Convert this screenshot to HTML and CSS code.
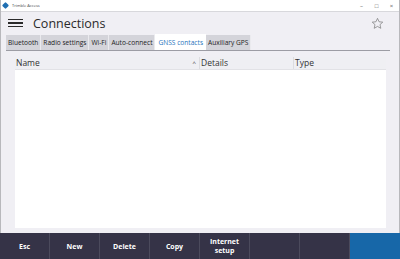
FILE: index.html
```html
<!DOCTYPE html>
<html>
    <head>
        <meta name="viewport" content="width=device-width, initial-scale=1.0">
        <link rel="stylesheet" href="styles.css">
    </head>
    <body>
        <div class="window">
            <div class="titlebar">
                <span class="appicon"></span>
                <span class="apptitle">Trimble Access</span>
                <span class="winbtns">
                    <span class="wb">&#8211;</span>
                    <span class="wb">&#9633;</span>
                    <span class="wb">&#215;</span>
                </span>
            </div>
            <div class="header">
                <div class="burger"><i></i><i></i><i></i></div>
                <p class="title">Connections</p>
                <svg class="star" width="13" height="13" viewBox="0 0 24 24">
                    <path d="M12 2.5l2.9 6.3 6.8.7-5.1 4.6 1.5 6.8L12 17.4l-6.1 3.5 1.5-6.8-5.1-4.6 6.8-.7z" fill="none" stroke="#777" stroke-width="1.3"/>
                </svg>
            </div>
            <div class="tabs">
                <button class="tab">Bluetooth</button>
                <button class="tab">Radio settings</button>
                <button class="tab">Wi-Fi</button>
                <button class="tab">Auto-connect</button>
                <button class="tab active">GNSS contacts</button>
                <button class="tab">Auxiliary GPS</button>
            </div>
            <div class="content">
                <div class="table">
                    <div class="thead">
                        <div class="th name">Name <span class="sort">^</span></div>
                        <div class="th details">Details</div>
                        <div class="th type">Type</div>
                    </div>
                    <div class="tbody"></div>
                </div>
            </div>
            <div class="softkeys">
                <button class="key">Esc</button>
                <button class="key">New</button>
                <button class="key">Delete</button>
                <button class="key">Copy</button>
                <button class="key">Internet<br>setup</button>
                <button class="key"></button>
                <button class="key"></button>
                <button class="key enter"></button>
            </div>
        </div>
    </body>
</html>
```

FILE: styles.css
```css
body{
    margin: 0;
    font-family: "Open Sans", "Noto Sans", sans-serif;
    background: #f0eff4;
}
.window{
    width: 400px;
    height: 259px;
    box-sizing: border-box;
    border-left: 1px solid #b8b8bc;
    border-right: 1px solid #b8b8bc;
    display: flex;
    flex-direction: column;
    background: #f0eff4;
}
.titlebar{
    height: 11px;
    background: #fff;
    border-bottom: 1px solid #d8d8dc;
    display: flex;
    align-items: center;
    padding-left: 2px;
}
.appicon{
    width: 5px;
    height: 5px;
    background: #1f6fb2;
    border-radius: 1px;
    transform: rotate(45deg);
}
.apptitle{
    font-size: 4px;
    color: #444;
    margin-left: 4px;
}
.winbtns{
    margin-left: auto;
    display: flex;
}
.wb{
    width: 15px;
    text-align: center;
    font-size: 6px;
    color: #555;
}
.header{
    height: 22px;
    display: flex;
    align-items: center;
    padding: 0 15px 0 7px;
}
.burger{
    width: 15px;
    display: flex;
    flex-direction: column;
    gap: 2px;
}
.burger i{
    display: block;
    height: 1.3px;
    background: #2a2a2a;
}
.title{
    margin: 0 0 0 10px;
    font-size: 12.5px;
    color: #2a2a2a;
}
.star{
    margin-left: auto;
}
.tabs{
    margin: 0 9px 0 5px;
    display: flex;
    border-bottom: 1px solid #9c9ca4;
    height: 16px;
}
.tab{
    border: none;
    border-right: 1px solid #eaeaee;
    background: #d4d4da;
    font-family: inherit;
    font-size: 6.6px;
    color: #222;
    padding: 0 2px;
    margin-top: 1px;
}
.tab.active{
    background: #fff;
    color: #1f74bd;
    margin-top: 0;
    border-right: none;
    padding: 0 3px;
}
.content{
    flex: 1;
    padding: 6px 13px 5px 14px;
    display: flex;
}
.table{
    flex: 1;
    display: flex;
    flex-direction: column;
    background: #fff;
}
.thead{
    display: flex;
    height: 12px;
    background: #efeff3;
    border-bottom: 1px solid #e2e2e6;
}
.th{
    font-size: 8.5px;
    line-height: 12px;
    color: #333;
    padding-left: 1px;
    border-right: 1px solid #dcdce0;
}
.name{
    width: 183px;
    display: flex;
}
.sort{
    margin-left: auto;
    font-size: 6px;
    margin-right: 3px;
}
.details{
    width: 92px;
}
.type{
    flex: 1;
    border-right: none;
}
.tbody{
    flex: 1;
}
.softkeys{
    height: 26px;
    display: grid;
    grid-template-columns: repeat(8, 1fr);
    background: #353347;
    margin: 0 -1px;
}
.key{
    border: none;
    border-right: 1px solid #4b4a5c;
    background: #353347;
    color: #fff;
    font-family: inherit;
    font-weight: bold;
    font-size: 7px;
    line-height: 9px;
    padding: 0;
}
.key.enter{
    background: #1767a8;
    border-right: none;
}
```
